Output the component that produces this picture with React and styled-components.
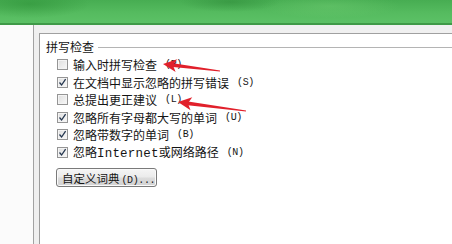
import React from 'react'
import styled, { createGlobalStyle } from 'styled-components'

const Global = createGlobalStyle`
  html, body { margin: 0; padding: 0; background: #fbfbfb; }
  body { width: 452px; height: 244px; overflow: hidden; }
`

const cjk = `"Noto Sans CJK SC", "Noto Sans", sans-serif`

const Screen = styled.div`
  width: 452px;
  height: 244px;
  display: flex;
  flex-direction: column;
  position: relative;
  overflow: hidden;
  font-family: ${cjk};
  color: #141414;
`

const Banner = styled.div`
  height: 23px;
  flex: none;
  background:
    radial-gradient(ellipse 60px 14px at 30px 4px, rgba(40, 140, 50, 0.5), transparent),
    radial-gradient(ellipse 50px 10px at 230px 2px, rgba(40, 130, 50, 0.45), transparent),
    radial-gradient(ellipse 70px 12px at 330px 6px, rgba(120, 210, 120, 0.35), transparent),
    linear-gradient(180deg, #47ad52 0%, #55bb5f 55%, #5cc166 100%);
  border-bottom: 2px solid #3f9a48;
`

const Body = styled.div`
  flex: 1;
  display: flex;
  background: #f0f0f0;
  padding-top: 8px;
`

const NavPane = styled.div`
  width: 33px;
  flex: none;
  background: #fbfbfb;
  border-right: 1px solid #a2a2a2;
  margin-top: -8px;
`

const Gutter = styled.div`
  width: 5px;
  flex: none;
  background: #efefef;
`

const Content = styled.div`
  flex: 1;
  background: #ffffff;
  border-left: 1px solid #9c9c9c;
  border-top: 1px solid #a0a0a0;
  padding: 6px 0 0 6px;
`

const GroupHead = styled.div`
  display: flex;
  align-items: center;
  height: 14px;
  font-size: 12px;
  line-height: 14px;
  gap: 4px;
  &::after {
    content: '';
    flex: 1;
    border-top: 1px solid #b4b4b4;
    margin-top: 1px;
  }
`

const Options = styled.div`
  display: flex;
  flex-direction: column;
  padding: 2px 0 0 11px;
`

const Row = styled.label`
  display: flex;
  align-items: center;
  height: 17.5px;
  gap: 5px;
  font-size: 12px;
  white-space: nowrap;
`

const Box = styled.span`
  width: 9px;
  height: 9px;
  flex: none;
  border: 1px solid #959595;
  background: linear-gradient(135deg, #dedede, #f8f8f8);
  box-shadow: inset 0 0 0 1px #f4f4f4;
  display: flex;
  align-items: center;
  justify-content: center;
`

const Latin = styled.span`
  font-family: "Liberation Mono", monospace;
  font-size: 12.5px;
  letter-spacing: 0.2px;
`

const Key = styled.span`
  font-family: "Liberation Mono", monospace;
  font-size: 10px;
  letter-spacing: -0.4px;
  margin-left: ${p => (p.$tight ? 2 : 3)}px;
  color: #161616;
`

const Button = styled.button`
  margin: 7px 0 0 -1px;
  align-self: flex-start;
  width: 101px;
  height: 19px;
  padding: 0 0 0 5px;
  text-align: left;
  white-space: nowrap;
  font-family: ${cjk};
  font-size: 11.5px;
  color: #141414;
  border: 1px solid #7a7a7a;
  border-radius: 3px;
  background: linear-gradient(180deg, #f5f5f5 0%, #ebebeb 48%, #dcdcdc 52%, #d2d2d2 100%);
  box-shadow: inset 0 0 0 1px #fafafa;
`

const Overlay = styled.svg`
  position: absolute;
  left: 0;
  top: 0;
  pointer-events: none;
`

const Check = () => (
  <svg width="9" height="9" viewBox="0 0 9 9">
    <path d="M1.5 4.5 L3.6 7 L7.6 1.2" fill="none" stroke="#24364f" strokeWidth="1.3" />
  </svg>
)

const Option = ({ checked, children, hotkey }) => (
  <Row>
    <Box>{checked && <Check />}</Box>
    <span>{children}</span>
    <Key>({hotkey})</Key>
  </Row>
)

// hand-drawn style annotation arrow: tapering shaft + solid head
const Arrow = ({ tip, tail }) => {
  const [tx, ty] = tip
  const [ex, ey] = tail
  const ang = Math.atan2(ey - ty, ex - tx)
  const at = (a, len) => [tx + Math.cos(ang + a) * len, ty + Math.sin(ang + a) * len]
  const b1 = at(0.45, 15)
  const b2 = at(-0.45, 15)
  const n = at(0, 10)
  const ox = -Math.sin(ang)
  const oy = Math.cos(ang)
  return (
    <g fill="#e1202b">
      <path
        d={`M${n[0] + ox * 1.9} ${n[1] + oy * 1.9} L${ex + ox * 0.6} ${ey + oy * 0.6} L${ex - ox * 0.6} ${ey - oy * 0.6} L${n[0] - ox * 1.9} ${n[1] - oy * 1.9} Z`}
      />
      <path d={`M${tx} ${ty} L${b1[0]} ${b1[1]} L${n[0]} ${n[1]} L${b2[0]} ${b2[1]} Z`} />
    </g>
  )
}

const App = () => (
  <Screen>
    <Global />
    <Banner />
    <Body>
      <NavPane />
      <Gutter />
      <Content>
        <GroupHead>拼写检查</GroupHead>
        <Options>
          <Option hotkey="P">输入时拼写检查</Option>
          <Option checked hotkey="S">在文档中显示忽略的拼写错误</Option>
          <Option hotkey="L">总提出更正建议</Option>
          <Option checked hotkey="U">忽略所有字母都大写的单词</Option>
          <Option checked hotkey="B">忽略带数字的单词</Option>
          <Option checked hotkey="N">
            忽略<Latin>Internet</Latin>或网络路径
          </Option>
          <Button>
            自定义词典<Key $tight>(D)...</Key>
          </Button>
        </Options>
      </Content>
    </Body>
    <Overlay width="452" height="244">
      <Arrow tip={[163, 64]} tail={[220, 71]} />
      <Arrow tip={[178, 102]} tail={[246, 111]} />
    </Overlay>
  </Screen>
)

export default App
